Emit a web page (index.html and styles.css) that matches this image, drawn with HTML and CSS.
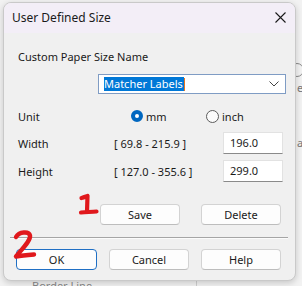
FILE: index.html
```html
<!DOCTYPE html>
<html>
<head>
<meta charset="UTF-8">
<title>User Defined Size</title>
<link rel="stylesheet" href="styles.css">
</head>
<body>
<div class="desk">
  <div class="behind">
    <span class="behind-circle"></span>
    <span class="behind-e">e</span>
    <span class="behind-a">a</span>
    <span class="behind-text">Border Line</span>
    <span class="behind-vline"></span>
  </div>

  <div class="dialog">
    <div class="titlebar">
      <span class="title">User Defined Size</span>
      <svg class="close" width="11" height="11" viewBox="0 0 11 11">
        <path d="M0.5 0.5 L10.5 10.5 M10.5 0.5 L0.5 10.5" stroke="#1a1a1a" stroke-width="1.1" fill="none"/>
      </svg>
    </div>

    <div class="content">
      <div class="name-label">Custom Paper Size Name</div>
      <div class="combo">
        <span class="combo-text"><span class="sel">Matcher Labels</span><span class="caret"></span></span>
        <svg class="chev" width="10" height="6" viewBox="0 0 10 6">
          <path d="M0.5 0.5 L5 5 L9.5 0.5" stroke="#444" stroke-width="1" fill="none"/>
        </svg>
      </div>

      <div class="row unit-row">
        <span class="lbl">Unit</span>
        <label class="radio"><span class="dot on"></span>mm</label>
        <label class="radio inch"><span class="dot"></span>inch</label>
      </div>

      <div class="row size-row">
        <span class="lbl">Width</span>
        <span class="range">[ 69.8 - 215.9 ]</span>
        <span class="field">196.0</span>
      </div>

      <div class="row size-row height-row">
        <span class="lbl">Height</span>
        <span class="range">[ 127.0 - 355.6 ]</span>
        <span class="field">299.0</span>
      </div>

      <div class="save-row">
        <button class="btn">Save</button>
        <button class="btn">Delete</button>
      </div>
    </div>

    <hr class="sep">

    <div class="bottom-row">
      <button class="btn focus">OK</button>
      <button class="btn">Cancel</button>
      <button class="btn">Help</button>
    </div>
  </div>

  <!-- red hand marks -->
  <svg class="mark mark1" width="22" height="24" viewBox="0 0 22 24">
    <path d="M3.5 5 C6 4.5 8 3.5 9.5 3 L9 18.5 M3 19.5 C8 19 13 19 18.5 18.5" stroke="#e0181c" stroke-width="4.2" stroke-linecap="round" stroke-linejoin="round" fill="none"/>
  </svg>
  <svg class="mark mark2" width="30" height="36" viewBox="0 0 30 36">
    <path d="M7 9 C10 3.5 20 3 21 7.5 C22 12 14 20 7 28.5 C13 27.5 19 27 25 26.5" stroke="#e0181c" stroke-width="4.4" stroke-linecap="round" stroke-linejoin="round" fill="none"/>
  </svg>
</div>
</body>
</html>
```

FILE: styles.css
```css
body {
  margin: 0;
  background: #f2f2f2;
  font-family: "Noto Sans", "Open Sans", sans-serif;
  font-size: 11px;
  color: #1a1a1a;
}

.desk {
  position: relative;
  width: 302px;
  height: 286px;
  overflow: hidden;
}

/* window behind the dialog */
.behind {
  position: absolute;
  inset: 0;
  color: #777;
}
.behind-circle {
  position: absolute;
  left: 290px;
  top: 63px;
  width: 12px;
  height: 12px;
  border: 1px solid #888;
  border-radius: 50%;
}
.behind-e {
  position: absolute;
  left: 297px;
  top: 80px;
}
.behind-a {
  position: absolute;
  left: 297px;
  top: 135px;
}
.behind-text {
  position: absolute;
  left: 32px;
  top: 278px;
  color: #888;
}
.behind-vline {
  position: absolute;
  left: 196px;
  top: 270px;
  width: 1px;
  height: 20px;
  background: #cfcfcf;
}

.dialog {
  position: absolute;
  left: 3px;
  top: 2px;
  width: 291px;
  height: 277px;
  background: #f0f0f0;
  border: 1px solid #c9c9c9;
  border-radius: 8px;
  box-shadow: 0 2px 6px rgba(0, 0, 0, 0.18);
  overflow: hidden;
}

.titlebar {
  height: 30px;
  background: #f3eef7;
  display: flex;
  align-items: center;
  justify-content: space-between;
  padding: 0 9px 0 8px;
}
.title {
  font-size: 12px;
  margin-top: -2px;
}
.close {
  margin-top: -1px;
}

.content {
  padding: 15px 0 0 14px;
}

.name-label {
  height: 17px;
  line-height: 17px;
}

.combo {
  margin: 9px 0 0 80px;
  width: 181px;
  height: 18px;
  background: #fff;
  border: 1px solid #7f9cc4;
  display: flex;
  align-items: center;
  justify-content: space-between;
  padding-left: 5px;
  box-sizing: content-box;
}
.combo-text {
  display: flex;
  align-items: center;
}
.sel {
  background: #0078d7;
  color: #fff;
  line-height: 13px;
  padding: 0 1px 1px 0;
}
.caret {
  width: 1px;
  height: 13px;
  background: #e8761e;
}
.chev {
  margin-right: 6px;
}

.row {
  display: flex;
  align-items: center;
}
.lbl {
  width: 96px;
}

.unit-row {
  height: 22px;
  margin-top: 11px;
}
.radio {
  display: flex;
  align-items: center;
  gap: 3px;
  width: 75px;
  margin-left: 17px;
}
.radio.inch {
  margin-left: 0;
}
.dot {
  width: 11px;
  height: 11px;
  border: 1px solid #5c5c5c;
  border-radius: 50%;
  background: #fbfbfb;
  box-sizing: content-box;
}
.dot.on {
  width: 4px;
  height: 4px;
  border: 4px solid #0067c0;
  background: #fff;
}

.size-row {
  height: 22px;
  margin-top: 5px;
}
.height-row {
  margin-top: 6px;
}
.range {
  width: 109px;
}
.field {
  width: 52px;
  height: 20px;
  line-height: 20px;
  padding-left: 6px;
  background: #fff;
  border: 1px solid #e2e2e2;
  border-bottom-color: #8a8a8a;
}

.save-row {
  display: flex;
  gap: 21px;
  margin: 22px 0 0 82px;
}

.btn {
  width: 80px;
  height: 21px;
  font: inherit;
  color: #1a1a1a;
  background: #fdfdfd;
  border: 1px solid #d3d3d3;
  border-bottom-color: #bdbdbd;
  border-radius: 4px;
  padding: 0;
}
.btn.focus {
  width: 81px;
  border: 1px solid #1f6fc4;
}

.sep {
  margin: 12px 0 0 6px;
  width: 278px;
  border: 0;
  border-top: 1px solid #a5a5a5;
  border-bottom: 1px solid #fbfbfb;
}

.bottom-row {
  display: flex;
  gap: 12px;
  margin: 10px 0 0 12px;
}

.mark {
  position: absolute;
}
.mark1 {
  left: 78px;
  top: 193px;
}
.mark2 {
  left: 9px;
  top: 228px;
}
```
